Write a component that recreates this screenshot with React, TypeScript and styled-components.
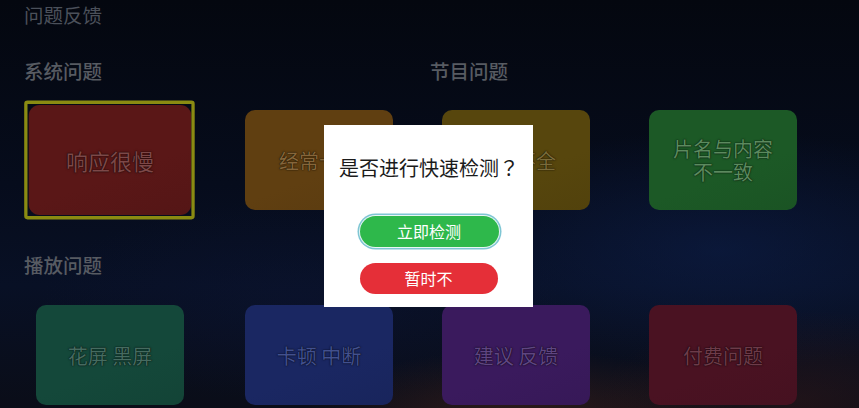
import React from "react";
import styled, { createGlobalStyle } from "styled-components";

const Global = createGlobalStyle`
  html, body { margin: 0; padding: 0; background: #050913; }
  body { width: 859px; height: 408px; overflow: hidden; font-family: "Noto Sans CJK SC", "Noto Sans", sans-serif; }
`;

const Screen = styled.div`
  position: relative;
  width: 859px;
  height: 408px;
  overflow: hidden;
  background:
    radial-gradient(ellipse 220px 70px at 520px 420px, rgba(120, 55, 30, 0.35), transparent 100%),
    radial-gradient(ellipse 200px 90px at 800px 400px, rgba(70, 30, 25, 0.35), transparent 100%),
    radial-gradient(ellipse 300px 120px at 720px 250px, rgba(15, 35, 85, 0.45), transparent 100%),
    radial-gradient(ellipse 260px 100px at 300px 300px, rgba(12, 20, 50, 0.5), transparent 100%),
    linear-gradient(180deg, #04070f 0%, #060c1c 45%, #081025 70%, #0a0d18 100%);
`;

const Board = styled.div`
  display: grid;
  grid-template-columns: 209px 197px 207px 160px;
  grid-template-rows: 27px 56px 127px 67px 128px;
  align-items: end;
  padding-left: 24px;
`;

const Header = styled.div`
  grid-column: 1 / -1;
  font-size: 19.5px;
  line-height: 24px;
  color: #4b505a;
`;

const SectionLabel = styled.div<{ $col: number; $full?: boolean }>`
  grid-column: ${(p) => (p.$full ? "1 / -1" : `${p.$col} / span 2`)};
  font-size: 19.5px;
  line-height: 24px;
  font-weight: 500;
  color: #575b62;
`;

const Card = styled.div<{ $bg: string; $fg: string; $selected?: boolean }>`
  position: relative;
  margin-left: 12px;
  width: 148px;
  height: 100px;
  border-radius: 10px;
  background: linear-gradient(160deg, ${(p) => p.$bg} 0%, ${(p) => p.$bg} 60%, rgba(0, 0, 0, 0.12) 140%), ${(p) => p.$bg};
  display: flex;
  align-items: center;
  justify-content: center;
  text-align: center;
  font-size: 20px;
  line-height: 23px;
  color: ${(p) => p.$fg};
  text-shadow: 0 0 1px rgba(0, 0, 0, 0.9), 0 0 2px rgba(0, 0, 0, 0.5);
  transform: ${(p) => (p.$selected ? "scale(1.1)" : "none")};
  &::before {
    content: "";
    display: ${(p) => (p.$selected ? "block" : "none")};
    position: absolute;
    inset: -4px -3px -4px -4px;
    border: 3px solid #8a8b12;
    border-radius: 3px;
  }
`;

const Dialog = styled.div`
  position: absolute;
  left: 324px;
  top: 125px;
  width: 209px;
  height: 182px;
  box-sizing: border-box;
  background: #ffffff;
  padding-top: 31px;
  display: flex;
  flex-direction: column;
  align-items: center;
`;

const DialogTitle = styled.div`
  font-size: 20px;
  line-height: 24px;
  color: #1b1b1b;
  white-space: nowrap;
  margin-left: 1px;
`;

const Punct = styled.span`
  font-family: "Noto Sans CJK JP", "Noto Sans CJK SC", sans-serif;
`;

const Actions = styled.div`
  margin-top: 36px;
  display: flex;
  flex-direction: column;
  align-items: center;
  gap: 16px;
`;

const ActionButton = styled.button<{ $tone: "go" | "stop" }>`
  width: ${(p) => (p.$tone === "go" ? "139px" : "138px")};
  height: 31px;
  border: none;
  border-radius: 16px;
  padding: 0;
  margin: 0;
  font-family: "Noto Sans CJK SC", "Noto Sans", sans-serif;
  font-size: 16px;
  line-height: 31px;
  color: #ffffff;
  background: ${(p) => (p.$tone === "go" ? "#2eb84b" : "#e52f38")};
  box-shadow: ${(p) => (p.$tone === "go" ? "0 0 0 1px #e8f6f4, 0 0 0 2.5px #7fc6d4" : "none")};
  margin-left: ${(p) => (p.$tone === "go" ? "1px" : "0")};
`;

type Item = { text: React.ReactNode; bg: string; fg: string; selected?: boolean };

const row1: Item[] = [
  { text: "响应很慢", bg: "#5a1717", fg: "#7d4848", selected: true },
  { text: "经常卡死", bg: "#603f11", fg: "#86663a" },
  { text: "节目不全", bg: "#57460d", fg: "#7b6b3a" },
  { text: <>片名与内容<br />不一致</>, bg: "#1c5926", fg: "#5b8a5e" },
];

const row2: Item[] = [
  { text: "花屏 黑屏", bg: "#14483a", fg: "#466b60" },
  { text: "卡顿 中断", bg: "#1a2762", fg: "#42508e" },
  { text: "建议 反馈", bg: "#3a1a5d", fg: "#5f4581" },
  { text: "付费问题", bg: "#4a1222", fg: "#6d3b49" },
];

export default function App() {
  return (
    <Screen>
      <Global />
      <Board>
        <Header>问题反馈</Header>
        <SectionLabel $col={1}>系统问题</SectionLabel>
        <SectionLabel $col={3}>节目问题</SectionLabel>
        {row1.map((c, i) => (
          <Card key={i} $bg={c.bg} $fg={c.fg} $selected={c.selected}>
            <span>{c.text}</span>
          </Card>
        ))}
        <SectionLabel $col={1} $full>播放问题</SectionLabel>
        {row2.map((c, i) => (
          <Card key={i} $bg={c.bg} $fg={c.fg}>
            <span>{c.text}</span>
          </Card>
        ))}
      </Board>
      <Dialog>
        <DialogTitle>
          是否进行快速检测<Punct>？</Punct>
        </DialogTitle>
        <Actions>
          <ActionButton $tone="go">立即检测</ActionButton>
          <ActionButton $tone="stop">暂时不</ActionButton>
        </Actions>
      </Dialog>
    </Screen>
  );
}
